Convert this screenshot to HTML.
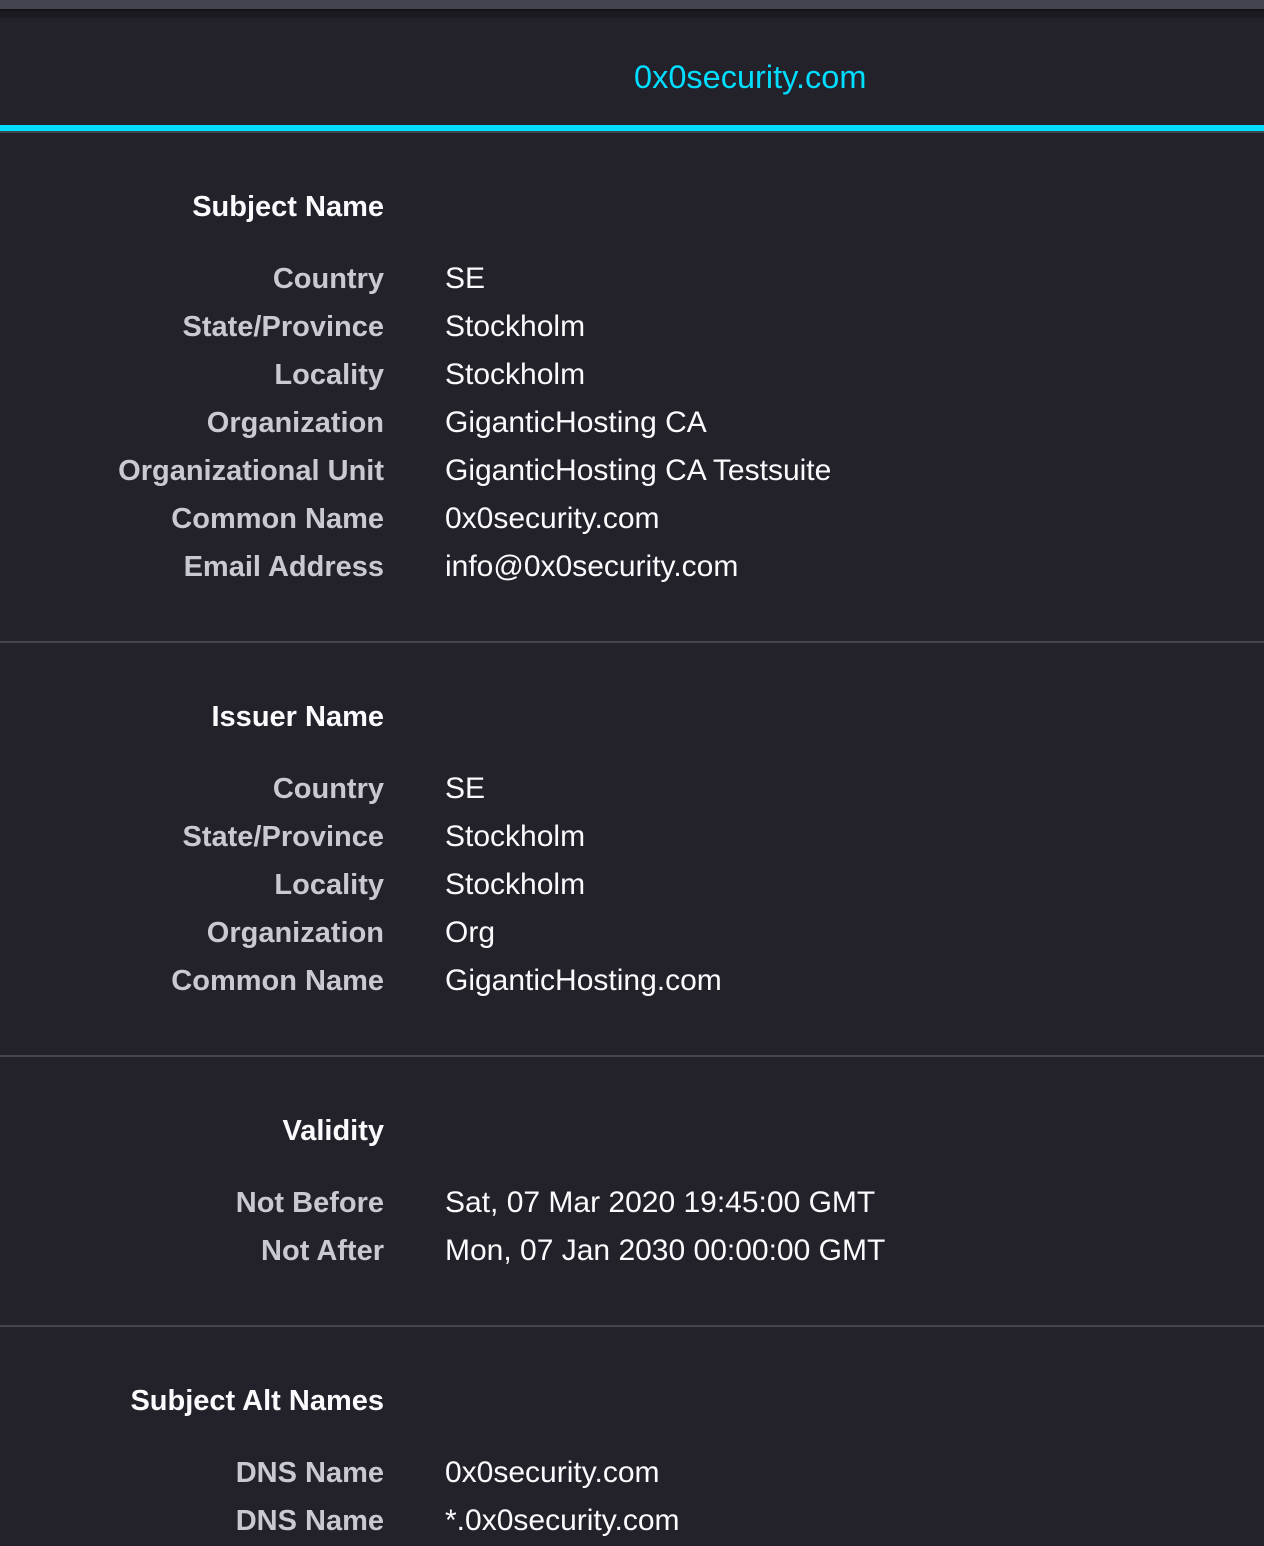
<!DOCTYPE html>
<html><head><meta charset="utf-8"><style>
*{margin:0;padding:0;box-sizing:border-box}
body{width:1264px;height:1540px;background:#23222b;overflow:hidden;position:relative;font-family:"Liberation Sans",sans-serif}
.bar{position:absolute;left:0;width:1264px}
.t{position:absolute;height:48px;line-height:50px;white-space:nowrap;font-size:30px}
.l{right:880px;text-align:right;color:#c9c9d1;font-weight:bold;font-size:29px}
.h{right:880px;text-align:right;color:#fbfbfe;font-weight:bold;font-size:29px}
.v{left:445px;color:#fbfbfe}
</style></head><body>
<div class="bar" style="top:0;height:9px;background:#42454d"></div>
<div class="bar" style="top:9px;height:2px;background:#131218"></div>
<div class="bar" style="top:11px;height:7px;background:#1c1b22"></div>
<div class="t" style="left:634px;top:52px;color:#00ddff;font-size:32.5px">0x0security.com</div>
<div class="bar" style="top:125px;height:6px;background:#00ddff"></div>
<div class="bar" style="top:131px;height:2px;background:#3a4a55"></div>

<div class="t h" style="top:182px">Subject Name</div>
<div class="t l" style="top:254px">Country</div><div class="t v" style="top:254px">SE</div>
<div class="t l" style="top:302px">State/Province</div><div class="t v" style="top:302px">Stockholm</div>
<div class="t l" style="top:350px">Locality</div><div class="t v" style="top:350px">Stockholm</div>
<div class="t l" style="top:398px">Organization</div><div class="t v" style="top:398px">GiganticHosting CA</div>
<div class="t l" style="top:446px">Organizational Unit</div><div class="t v" style="top:446px">GiganticHosting CA Testsuite</div>
<div class="t l" style="top:494px">Common Name</div><div class="t v" style="top:494px">0x0security.com</div>
<div class="t l" style="top:542px">Email Address</div><div class="t v" style="top:542px">info@0x0security.com</div>
<div class="bar" style="top:641px;height:2px;background:#45454f"></div>

<div class="t h" style="top:692px">Issuer Name</div>
<div class="t l" style="top:764px">Country</div><div class="t v" style="top:764px">SE</div>
<div class="t l" style="top:812px">State/Province</div><div class="t v" style="top:812px">Stockholm</div>
<div class="t l" style="top:860px">Locality</div><div class="t v" style="top:860px">Stockholm</div>
<div class="t l" style="top:908px">Organization</div><div class="t v" style="top:908px">Org</div>
<div class="t l" style="top:956px">Common Name</div><div class="t v" style="top:956px">GiganticHosting.com</div>
<div class="bar" style="top:1055px;height:2px;background:#45454f"></div>

<div class="t h" style="top:1106px">Validity</div>
<div class="t l" style="top:1178px">Not Before</div><div class="t v" style="top:1178px">Sat, 07 Mar 2020 19:45:00 GMT</div>
<div class="t l" style="top:1226px">Not After</div><div class="t v" style="top:1226px">Mon, 07 Jan 2030 00:00:00 GMT</div>
<div class="bar" style="top:1325px;height:2px;background:#45454f"></div>

<div class="t h" style="top:1376px">Subject Alt Names</div>
<div class="t l" style="top:1448px">DNS Name</div><div class="t v" style="top:1448px">0x0security.com</div>
<div class="t l" style="top:1496px">DNS Name</div><div class="t v" style="top:1496px">*.0x0security.com</div>
</body></html>
